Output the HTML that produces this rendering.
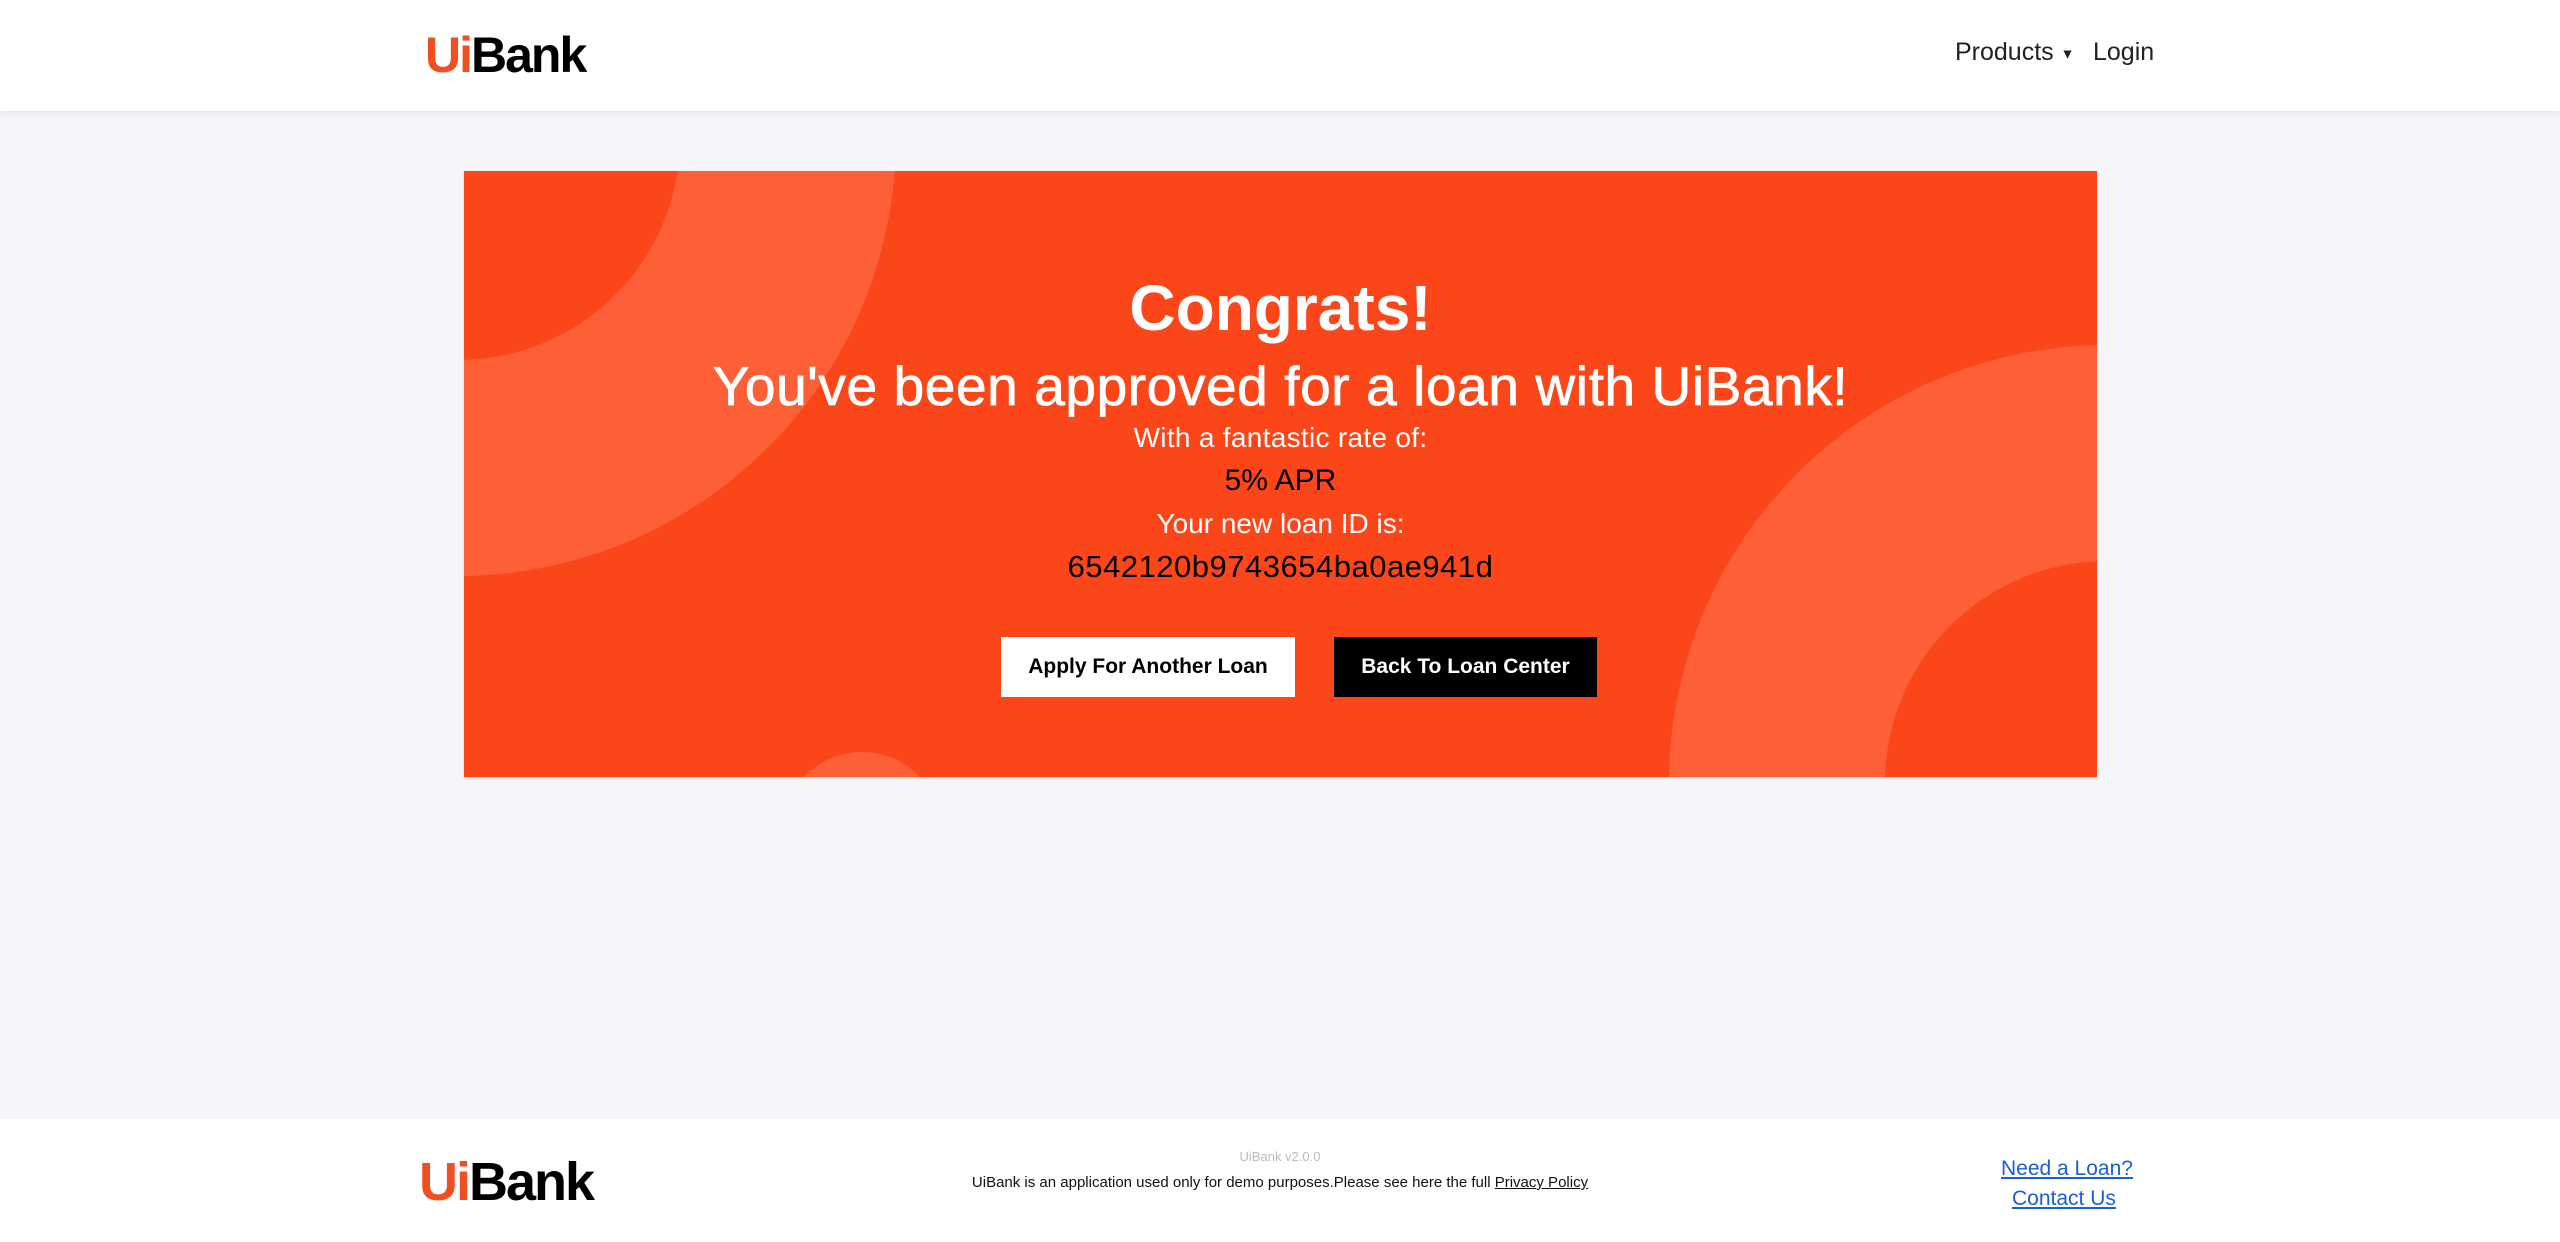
<!DOCTYPE html>
<html><head><meta charset="utf-8"><style>
*{margin:0;padding:0;box-sizing:border-box}
body{width:2560px;height:1242px;background:#f6f6fa;font-family:"Liberation Sans",sans-serif;position:relative;overflow:hidden}
.hdr{position:absolute;left:0;top:0;width:2560px;height:111px;background:#fff;box-shadow:0 2px 6px rgba(0,0,0,.08)}
.logo{position:absolute;font-weight:bold;letter-spacing:-2px}
.logo .u{color:#f04e23}.logo .b{color:#000}
.nav{position:absolute;top:38px;font-size:25px;color:#222}
.card{position:absolute;left:464px;top:171px;width:1633px;height:606px;background:#fa4619;overflow:hidden;box-shadow:0 1px 3px rgba(0,0,0,.1)}
.c{position:absolute;border-radius:50%}
.t{position:absolute;left:0;width:100%;text-align:center;color:#fff}
.btn{position:absolute;top:466px;height:60px;font-size:21px;font-weight:bold;line-height:60px;text-align:center}
.ftr{position:absolute;left:0;top:1119px;width:2560px;height:123px;background:#fff}
.lnk{position:absolute;color:#1a5fd6;text-decoration:underline;font-size:21px}
</style></head><body>
<div class="hdr">
<div class="logo" style="left:425px;top:26px;font-size:50px"><span class="u">Ui</span><span class="b">Bank</span></div>
<div class="nav" style="left:1955px">Products <span style="font-size:14px;vertical-align:middle">▼</span></div>
<div class="nav" style="left:2093px">Login</div>
</div>
<div class="card">
<div class="c" style="left:-444px;top:-471px;width:876px;height:876px;background:#fd5f36"></div>
<div class="c" style="left:-228px;top:-255px;width:444px;height:444px;background:#fa4619"></div>
<div class="c" style="left:1205px;top:174px;width:876px;height:876px;background:#fd5f36"></div>
<div class="c" style="left:1421px;top:390px;width:444px;height:444px;background:#fa4619"></div>
<div class="c" style="left:318px;top:581px;width:160px;height:160px;background:#fd5f36"></div>
<div class="t" style="top:100px;font-size:64px;font-weight:bold">Congrats!</div>
<div class="t" style="top:183px;font-size:55px;letter-spacing:0.6px;-webkit-text-stroke:0.8px #fff">You've been approved for a loan with UiBank!</div>
<div class="t" style="top:251px;font-size:28px;letter-spacing:0.3px">With a fantastic rate of:</div>
<div class="t" style="top:293px;font-size:30px;color:#000">5% APR</div>
<div class="t" style="top:337px;font-size:28px">Your new loan ID is:</div>
<div class="t" style="top:378px;font-size:31px;color:#000;letter-spacing:0.5px">6542120b9743654ba0ae941d</div>
<div class="btn" style="left:537px;width:294px;background:#fff;color:#000">Apply For Another Loan</div>
<div class="btn" style="left:870px;width:263px;background:#000;color:#fff">Back To Loan Center</div>
</div>
<div class="ftr">
<div class="logo" style="left:419px;top:32px;font-size:54px"><span class="u">Ui</span><span class="b">Bank</span></div>
<div style="position:absolute;left:0;width:2560px;top:30px;text-align:center;font-size:13px;color:#bbb">UiBank v2.0.0</div>
<div style="position:absolute;left:0;width:2560px;top:55px;text-align:center;font-size:15px;color:#111">UiBank is an application used only for demo purposes.Please see here the full <u>Privacy Policy</u></div>
<div class="lnk" style="left:2001px;top:38px">Need a Loan?</div>
<div class="lnk" style="left:2012px;top:68px">Contact Us</div>
</div>
</body></html>
